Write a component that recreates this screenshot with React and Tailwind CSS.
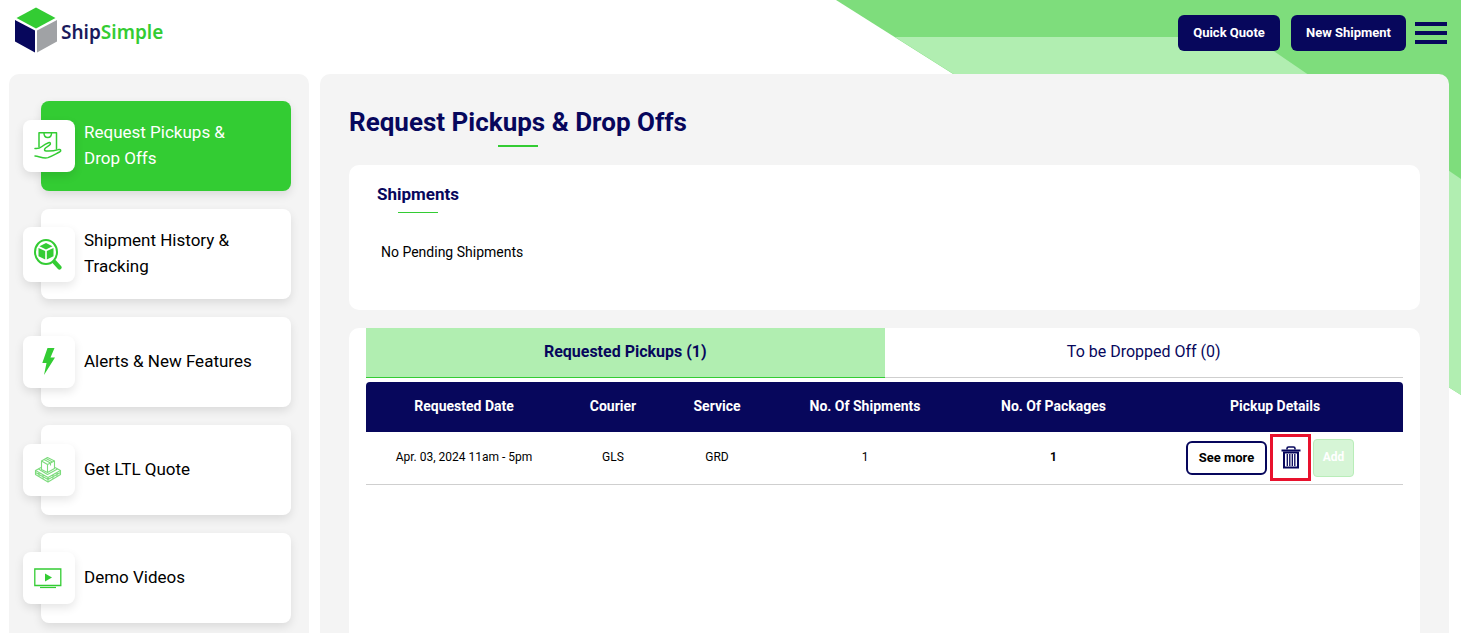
import clsx from 'clsx'

function Logo() {
  return (
    <a href="#" aria-label="ShipSimple" className="flex items-center gap-1">
      <svg width="42" height="46" viewBox="0 0 42 46" aria-hidden="true">
        <path d="M21 0.5 40.5 11 21 21.5 1.5 11Z" fill="#33cc33" />
        <path d="M0 13 20 23.5V45.500L0 34.5Z" fill="#07075c" />
        <path d="M42 13 22 23.5V45.500L42 34.5Z" fill="#a0a2a5" />
      </svg>
      <span className="pt-1 font-['Noto_Sans',sans-serif] text-[19px] leading-6 font-semibold text-[#1a1a5c]">
        Ship<span className="text-[#33cc33]">Simple</span>
      </span>
    </a>
  )
}

function PickupIcon() {
  return (
    <svg width="28" height="28" viewBox="0 0 28 28" fill="none" stroke="#33cc33" strokeWidth="1.5" strokeLinecap="round" strokeLinejoin="round">
      <path d="M5 15V0.800H22.500V17" />
      <path d="M10 1c0 6 7.500 6 7.500 0" />
      <path d="M1 16.500c3 .4 5-.4 7-2 2.500-2 4.500-3 6.500-3.800 2-.6 2.600 1.200 1 2.400L11.500 16c-1.300 1.300-1.500 2.800.5 3 4.500.3 8.500-.2 12.500-1.400 2.500-.6 3 1.400 1 2.400-4 2-7 4-11.500 5.600-5 1.400-9-1.600-13-1.600" />
    </svg>
  )
}

function TrackingIcon() {
  return (
    <svg width="28" height="31" viewBox="0 0 28 31" fill="#33cc33">
      <ellipse cx="12" cy="13" rx="11" ry="12" fill="none" stroke="#33cc33" strokeWidth="2" />
      <path d="M20.500 23 25.500 28.500" stroke="#33cc33" strokeWidth="4.200" strokeLinecap="round" />
      <path d="M12 4 18.500 7.300 12 10.500 5.500 7.300Z" />
      <path d="M4.500 9 11.200 12V20.500L4.500 17.200Z" />
      <path d="M19.500 9 12.800 12V20.500L19.500 17.200Z" />
    </svg>
  )
}

function AlertIcon() {
  return (
    <svg width="28" height="28" viewBox="0 0 28 28" fill="#33cc33">
      <path d="M13.500 0H20.500L16.500 9.500H21L10 27 12.500 15H8.300Z" />
    </svg>
  )
}

function PalletIcon() {
  return (
    <svg width="28" height="28" viewBox="0 0 28 28" fill="none" stroke="#7ddb7d" strokeWidth="1.100" strokeLinejoin="round">
      <path d="M7.500 5 13.500 1.500 20.500 5V12.500L13.500 16.500 7.500 13.500Z" />
      <path d="M7.500 5 13.500 8.500 20.500 5M13.500 8.500V16.500M10 3.500 16.500 7V9.500M12 2.500 18.500 6" />
      <path d="M7 11.500 1.500 14.500V18.500L14 26 26.500 18.500V14.500L21 11.500" />
      <path d="M1.500 14.500 14 21.500 26.500 14.500M1.500 16.500 14 23.500 26.500 16.500M14 21.500V26M4.500 13 13.500 18.500 23.500 13M5 16.500V20.500M9 19V23M19 19V23M23 16.500V20.500" />
    </svg>
  )
}

function VideoIcon() {
  return (
    <svg width="28" height="28" viewBox="0 0 28 28">
      <path d="M0.800 5H26.800V21.500H0.800Z" fill="none" stroke="#33cc33" strokeWidth="1.300" />
      <path d="M11 9.500V17.500L18 13.500Z" fill="#33cc33" />
      <path d="M6 23.500H22" stroke="#33cc33" strokeWidth="1.200" />
    </svg>
  )
}

function TrashIcon() {
  return (
    <svg width="20" height="23" viewBox="0 0 20 23" fill="none" stroke="#07075c" aria-hidden="true">
      <path d="M6 3.500V2.500Q6 1 7.500 1H12.500Q14 1 14 2.500V3.500" strokeWidth="1.6" />
      <path d="M0.500 4.500H19.500" strokeWidth="2" />
      <path d="M3 6.500V21.500H17V6.500Z" strokeWidth="2" />
      <path d="M6.300 8V20M8.800 8V20M11.300 8V20M13.800 8V20" strokeWidth="1.300" />
    </svg>
  )
}

const NAV = [
  { label: 'Request Pickups & Drop Offs', Icon: PickupIcon, active: true },
  { label: 'Shipment History & Tracking', Icon: TrackingIcon },
  { label: 'Alerts & New Features', Icon: AlertIcon },
  { label: 'Get LTL Quote', Icon: PalletIcon },
  { label: 'Demo Videos', Icon: VideoIcon },
]

const COLUMNS = [
  { label: 'Requested Date', width: 'w-[196px]' },
  { label: 'Courier', width: 'w-[102px]' },
  { label: 'Service', width: 'w-[106px]' },
  { label: 'No. Of Shipments', width: 'w-[190px]' },
  { label: 'No. Of Packages', width: 'w-[187px]' },
  { label: 'Pickup Details', width: 'w-[256px]' },
]

const PICKUPS = [
  { date: 'Apr. 03, 2024 11am - 5pm', courier: 'GLS', service: 'GRD', shipments: 1, packages: 1 },
]

function Header() {
  return (
    <header className="flex h-[74px] items-start justify-between pr-[14px] pl-[15px]">
      <div className="pt-[7px]">
        <Logo />
      </div>
      <div className="flex items-center pt-[15px]">
        <button className="h-9 w-[102px] rounded-md bg-[#07075c] text-[13px] font-bold text-white">Quick Quote</button>
        <button className="ml-[11px] h-9 w-[115px] rounded-md bg-[#07075c] text-[13px] font-bold text-white">New Shipment</button>
        <button aria-label="Menu" className="ml-[9px] flex w-8 flex-col gap-[5px]">
          <span className="h-1 w-full bg-[#07075c]" />
          <span className="h-1 w-full bg-[#07075c]" />
          <span className="h-1 w-full bg-[#07075c]" />
        </button>
      </div>
    </header>
  )
}

function Sidebar() {
  return (
    <nav className="flex w-[300px] shrink-0 flex-col gap-[18px] rounded-t-[10px] bg-[#f4f4f4] pt-[27px] pr-[18px] pb-2 pl-8">
      {NAV.map(({ label, Icon, active }) => (
        <a
          key={label}
          href="#"
          className={clsx(
            'flex h-[90px] items-center gap-[9px] rounded-lg shadow-[0_4px_10px_rgba(0,0,0,0.1)]',
            active ? 'bg-[#33cc33] text-white' : 'bg-white text-black'
          )}
        >
          <span className="-ml-[18px] flex min-h-[52px] w-[52px] shrink-0 items-center justify-center rounded-lg bg-white py-3 pr-[2px] shadow-[0_4px_10px_rgba(0,0,0,0.1)]">
            <Icon />
          </span>
          <span className="max-w-[180px] pb-[2px] text-[17px] leading-[26px]">{label}</span>
        </a>
      ))}
    </nav>
  )
}

function PickupTable() {
  return (
    <table className="mt-1 w-full text-center">
      <thead>
        <tr className="h-[50px] text-sm text-white">
          {COLUMNS.map(c => (
            <th key={c.label} className={clsx(c.width, 'bg-[#07075c] pb-[2px] font-bold first:rounded-tl last:rounded-tr')}>
              {c.label}
            </th>
          ))}
        </tr>
      </thead>
      <tbody>
        {PICKUPS.map(p => (
          <tr key={p.date} className="h-[52px] border-b border-[#cfcfcf] text-xs text-black">
            <td className="pb-[2px]">{p.date}</td>
            <td className="pb-[2px]">{p.courier}</td>
            <td className="pb-[2px]">{p.service}</td>
            <td className="pb-[2px]">{p.shipments}</td>
            <td className="pb-[2px] font-bold">{p.packages}</td>
            <td className="pr-[10px]">
              <div className="flex items-center justify-center">
                <button className="h-[34px] w-[81px] rounded-md border-2 border-[#07075c] bg-white pb-px text-[13px] font-bold">
                  See more
                </button>
                <button
                  aria-label="Delete pickup"
                  className="ml-[3px] flex h-[47px] w-[41px] items-center justify-center border-3 border-[#e8112d]"
                >
                  <TrashIcon />
                </button>
                <button className="ml-[2px] h-[38px] w-[41px] rounded border border-[#b9edb9] bg-[#d6f5d6] pb-[2px] text-xs font-bold text-white">
                  Add
                </button>
              </div>
            </td>
          </tr>
        ))}
      </tbody>
    </table>
  )
}

export default function App() {
  return (
    <div className="relative flex min-h-screen flex-col bg-white font-[Roboto,sans-serif]">
      <svg className="absolute top-0 right-0" width="625" height="395" viewBox="0 0 625 395" aria-hidden="true">
        <path d="M0 0H625V395Z" fill="#7edd7c" />
        <path d="M59 37H417L625 179V395Z" fill="#b1eeb1" />
      </svg>

      <div className="relative flex flex-1 flex-col">
        <Header />
        <div className="flex flex-1 gap-[11px] pr-3 pl-[9px]">
          <Sidebar />
          <main className="flex min-w-0 flex-1 flex-col rounded-t-[10px] bg-[#f4f4f4] px-[29px] pt-8">
            <div className="flex w-fit flex-col items-center">
              <h1 className="text-[26px] leading-8 font-bold text-[#07075c]">Request Pickups &amp; Drop Offs</h1>
              <span className="mt-[7px] h-[2px] w-10 bg-[#33cc33]" />
            </div>

            <section className="mt-[18px] h-[145px] rounded-[10px] bg-white px-7 pt-[17px]">
              <div className="flex w-fit flex-col items-center">
                <h2 className="text-[17px] leading-6 font-bold text-[#07075c]">Shipments</h2>
                <span className="mt-[6px] h-px w-10 bg-[#33cc33]" />
              </div>
              <p className="mt-[29px] px-1 text-sm text-black">No Pending Shipments</p>
            </section>

            <section className="mt-[18px] flex-1 rounded-t-[10px] bg-white px-[17px]">
              <div role="tablist" className="grid grid-cols-2 text-base text-[#07075c]">
                <button role="tab" aria-selected="true" className="h-[50px] border-b border-[#33cc33] bg-[#b1eeb1] pb-[2px] font-bold">
                  Requested Pickups (1)
                </button>
                <button role="tab" aria-selected="false" className="h-[50px] border-b border-[#cfcfcf] pb-[2px]">
                  To be Dropped Off (0)
                </button>
              </div>
              <PickupTable />
            </section>
          </main>
        </div>
      </div>
    </div>
  )
}
